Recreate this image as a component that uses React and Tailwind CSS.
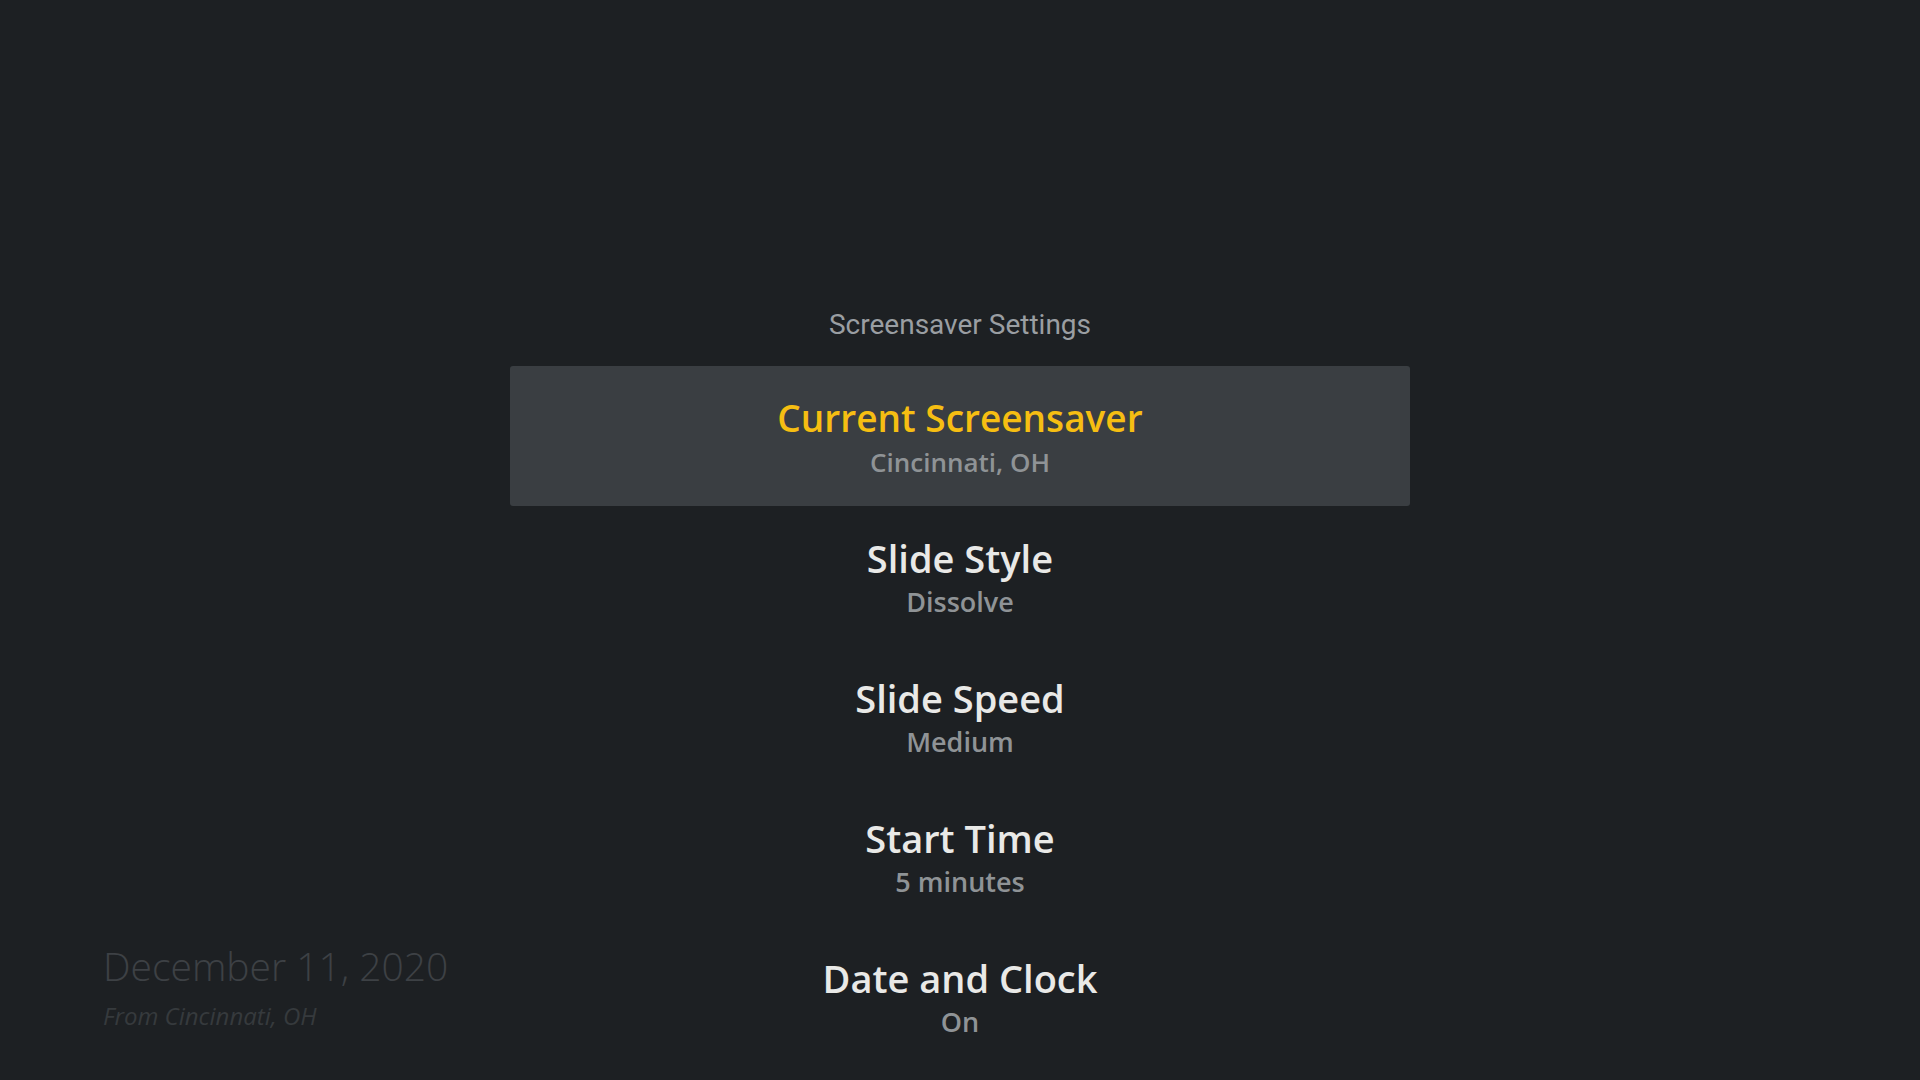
const items = [
  { title: 'Current Screensaver', value: 'Cincinnati, OH', active: true },
  { title: 'Slide Style', value: 'Dissolve' },
  { title: 'Slide Speed', value: 'Medium' },
  { title: 'Start Time', value: '5 minutes' },
  { title: 'Date and Clock', value: 'On' },
];

export default function App() {
  return (
    <div className="relative w-full h-[1080px] overflow-hidden bg-[#1d2023] font-['Open_Sans',sans-serif]">
      <div className="flex flex-col items-center pt-[307px]">
        <h1 className="h-[35px] leading-[35px] text-[28px] text-[#9a9ea2] font-['Roboto',sans-serif]">
          Screensaver Settings
        </h1>

        <ul className="mt-[24px] w-[900px] flex flex-col">
          {items.map((item) => (
            <li
              key={item.title}
              className={`h-[140px] flex flex-col items-center pt-[30px] rounded-[3px] ${item.active ? 'bg-[#3a3e42]' : ''}`}
            >
              <span
                className={`h-[44px] leading-[44px] ${item.active ? 'text-[37px] text-[#f6be12]' : 'text-[38px] text-[#e9e9e7]'} font-semibold`}
              >
                {item.title}
              </span>
              <span className={`mt-[4px] h-[36px] leading-[36px] ${item.active ? 'text-[26px]' : 'text-[27px]'} font-semibold text-[#8f9396]`}>
                {item.value}
              </span>
            </li>
          ))}
        </ul>
      </div>

      {/* screensaver date overlay */}
      <div className="absolute left-[103px] top-[942px] flex flex-col">
        <span className="h-[48px] leading-[48px] text-[39px] font-light text-[#3d4145]">December 11, 2020</span>
        <span className="mt-[10px] h-[32px] leading-[32px] text-[24px] italic text-[#363a3d]">From Cincinnati, OH</span>
      </div>
    </div>
  );
}
